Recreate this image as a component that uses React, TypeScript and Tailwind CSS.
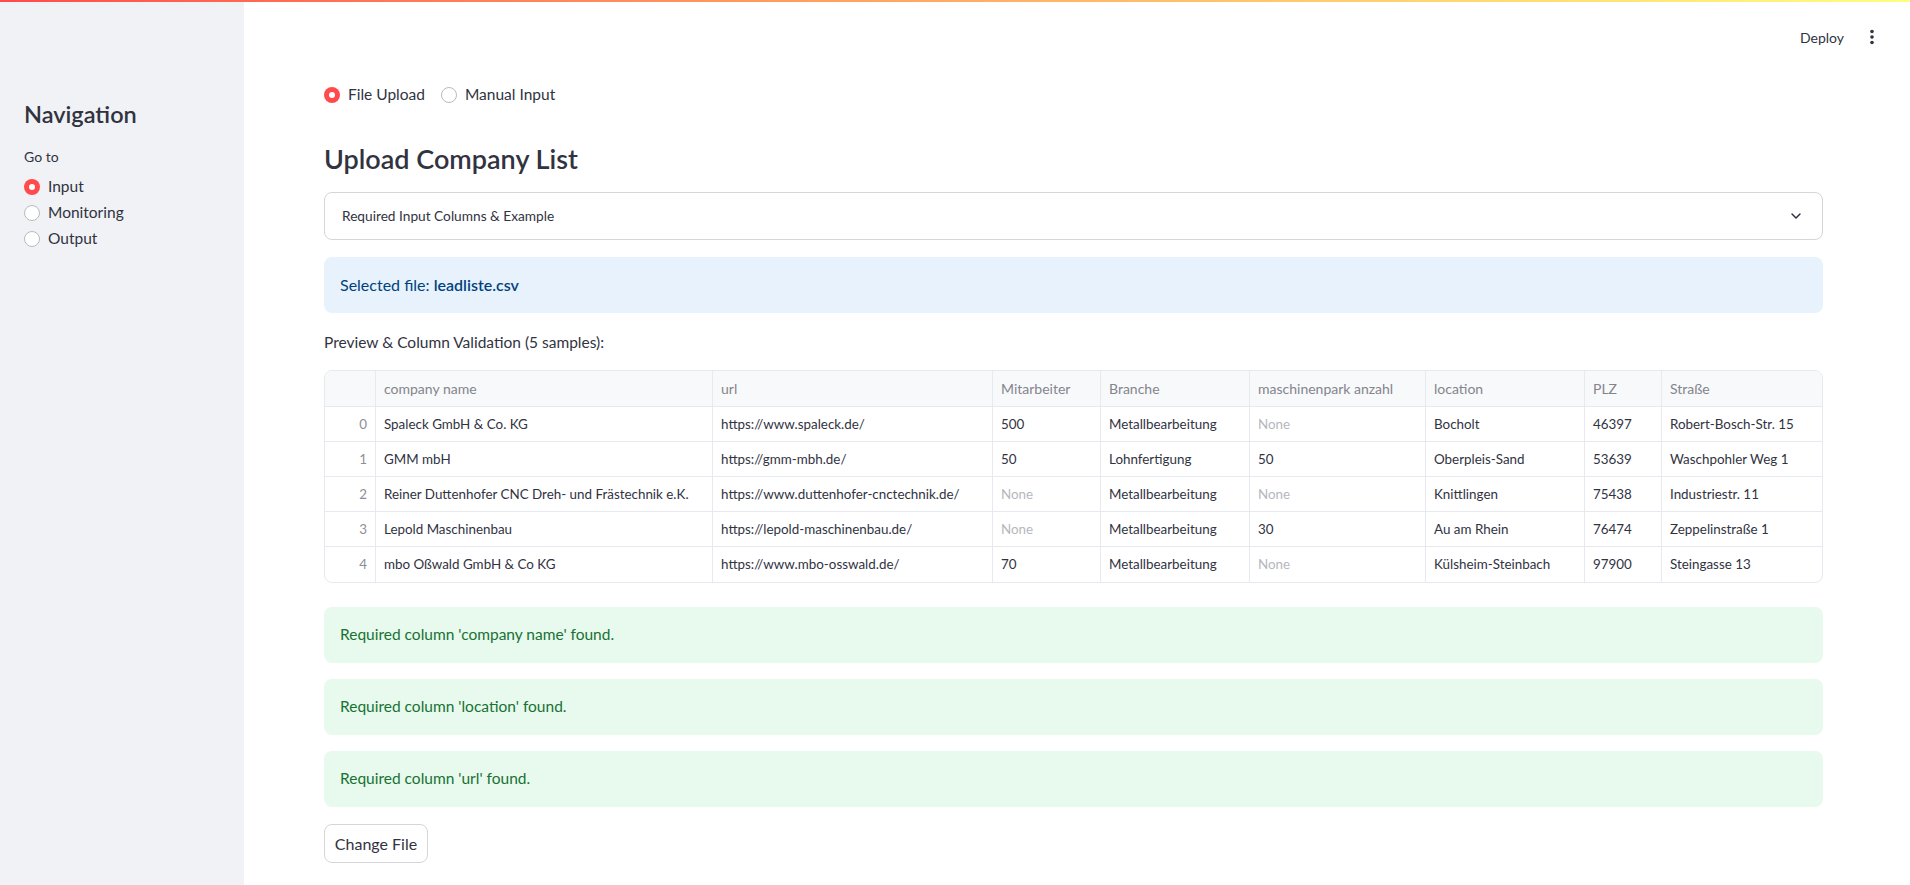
import React from "react";
import { ChevronDown } from "lucide-react";

const FONT = { fontFamily: "Lato, 'Noto Sans', sans-serif" };

const cols = ["", "company name", "url", "Mitarbeiter", "Branche", "maschinenpark anzahl", "location", "PLZ", "Straße"];

const rows: (string | null)[][] = [
  ["0", "Spaleck GmbH & Co. KG", "https://www.spaleck.de/", "500", "Metallbearbeitung", null, "Bocholt", "46397", "Robert-Bosch-Str. 15"],
  ["1", "GMM mbH", "https://gmm-mbh.de/", "50", "Lohnfertigung", "50", "Oberpleis-Sand", "53639", "Waschpohler Weg 1"],
  ["2", "Reiner Duttenhofer CNC Dreh- und Frästechnik e.K.", "https://www.duttenhofer-cnctechnik.de/", null, "Metallbearbeitung", null, "Knittlingen", "75438", "Industriestr. 11"],
  ["3", "Lepold Maschinenbau", "https://lepold-maschinenbau.de/", null, "Metallbearbeitung", "30", "Au am Rhein", "76474", "Zeppelinstraße 1"],
  ["4", "mbo Oßwald GmbH & Co KG", "https://www.mbo-osswald.de/", "70", "Metallbearbeitung", null, "Külsheim-Steinbach", "97900", "Steingasse 13"],
];

function Radio({ checked, label }: { checked: boolean; label: string }) {
  return (
    <div className="flex items-center h-6">
      {checked ? (
        <span className="w-4 h-4 rounded-full bg-[#ff4b4b] flex items-center justify-center">
          <span className="w-[6px] h-[6px] rounded-full bg-white" />
        </span>
      ) : (
        <span className="w-4 h-4 rounded-full border border-[#b9bbc1] bg-white" />
      )}
      <span className="ml-2 text-[15.5px] text-[#31333f]">{label}</span>
    </div>
  );
}

function Alert({ text }: { text: string }) {
  return (
    <div className="h-[56px] rounded-lg bg-[#e8f9ee] flex items-center px-4 text-[15.5px] text-[#177233]">
      {text}
    </div>
  );
}

export default function App() {
  return (
    <div className="relative flex w-[1910px] h-[885px] bg-white overflow-hidden" style={FONT}>
      <div className="absolute top-0 left-0 right-0 h-[2px] bg-gradient-to-r from-[#ff4b4b] to-[#fffd80]" />

      {/* Sidebar */}
      <aside className="w-[244px] shrink-0 bg-[#f0f2f6] pt-[100px] px-6">
        <h2 className="text-[23.5px] leading-[29px] font-semibold text-[#31333f]">Navigation</h2>
        <div className="mt-[18px] text-[14px] leading-5 text-[#31333f]">Go to</div>
        <div className="mt-2 flex flex-col gap-[2px]">
          <Radio checked label="Input" />
          <Radio checked={false} label="Monitoring" />
          <Radio checked={false} label="Output" />
        </div>
      </aside>

      {/* Main */}
      <main className="flex-1 flex flex-col">
        <div className="h-[74px] flex items-center justify-end pr-[34px]">
          <span className="text-[14px] text-[#31333f]">Deploy</span>
          <svg className="ml-[24px]" width="8" height="16" viewBox="0 0 8 16">
            <circle cx="4" cy="2.5" r="1.8" fill="#31333f" />
            <circle cx="4" cy="8" r="1.8" fill="#31333f" />
            <circle cx="4" cy="13.5" r="1.8" fill="#31333f" />
          </svg>
        </div>

        <div className="pl-[80px] w-[1579px] flex flex-col">
          <div className="mt-[9px] flex items-center gap-4">
            <Radio checked label="File Upload" />
            <Radio checked={false} label="Manual Input" />
          </div>

          <h3 className="mt-[35px] text-[27px] leading-[34px] font-semibold text-[#31333f]">Upload Company List</h3>

          <div className="mt-4 h-[48px] rounded-lg border border-[#d6d6d9] flex items-center justify-between pl-[17px] pr-[18px]">
            <span className="text-[13.7px] text-[#31333f]">Required Input Columns &amp; Example</span>
            <ChevronDown size={16} strokeWidth={2.2} color="#31333f" />
          </div>

          <div className="mt-[17px] h-[56px] rounded-lg bg-[#e8f2fc] flex items-center px-4 text-[16px] text-[#004280]">
            <span>Selected file: <b className="font-semibold">leadliste.csv</b></span>
          </div>

          <div className="mt-[19px] text-[15.5px] leading-5 text-[#31333f]">Preview &amp; Column Validation (5 samples):</div>

          <div className="mt-[18px] rounded-lg border border-[#e6e9ef] overflow-hidden grid grid-cols-[51px_337px_280px_108px_149px_176px_159px_77px_162px]">
            {cols.map((c, i) => (
              <div
                key={"h" + i}
                className={
                  "h-[36px] flex items-center px-2 bg-[#f8f9fb] text-[14px] text-[#83858c] border-b border-[#e6e9ef] " +
                  (i < cols.length - 1 ? "border-r" : "")
                }
              >
                {c}
              </div>
            ))}
            {rows.map((r, ri) =>
              r.map((v, ci) => (
                <div
                  key={ri + "-" + ci}
                  className={
                    "h-[35px] flex items-center px-2 text-[13.4px] border-[#e6e9ef] " +
                    (ri < rows.length - 1 ? "border-b " : "") +
                    (ci < r.length - 1 ? "border-r " : "") +
                    (ci === 0 ? "justify-end text-[#8d8f96]" : v === null ? "text-[#b5b7bc]" : "text-[#31333f]")
                  }
                >
                  {v === null ? "None" : v}
                </div>
              ))
            )}
          </div>

          <div className="mt-[24px] flex flex-col gap-4">
            <Alert text="Required column 'company name' found." />
            <Alert text="Required column 'location' found." />
            <Alert text="Required column 'url' found." />
          </div>

          <button className="mt-[17px] w-[104px] h-[39px] rounded-lg border border-[#d6d6d9] bg-white text-[16px] text-[#31333f] flex items-center justify-center">
            Change File
          </button>
        </div>
      </main>
    </div>
  );
}
